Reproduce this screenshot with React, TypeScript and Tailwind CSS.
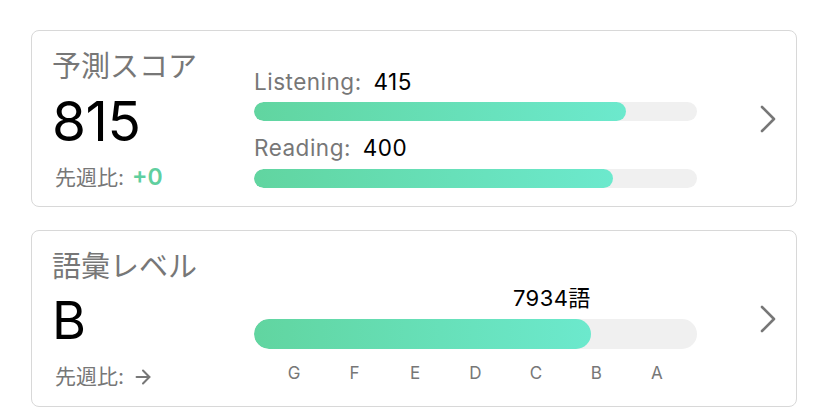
import { ArrowRight } from 'lucide-react';

const font = { fontFamily: 'Inter, "Noto Sans CJK JP", sans-serif' };

const Chevron = () => (
  <svg width="16" height="28" viewBox="0 0 16 28" fill="none">
    <polyline points="2,2 14,14 2,26" stroke="#777" strokeWidth="2.6" strokeLinecap="round" strokeLinejoin="round" />
  </svg>
);

const Bar = ({ pct, h }: { pct: number; h: string }) => (
  <div className={`w-full ${h} rounded-full bg-[#f0f0f0] overflow-hidden`}>
    <div
      className="h-full rounded-full bg-gradient-to-r from-[#61d5a0] to-[#6ce9cd]"
      style={{ width: `${pct}%` }}
    />
  </div>
);

const App = () => {
  const grades = ['G', 'F', 'E', 'D', 'C', 'B', 'A'];
  return (
    <div className="w-[828px] h-[418px] bg-white pt-[30px] pl-[31px]" style={font}>
      {/* Score card */}
      <div className="w-[766px] h-[177px] rounded-[8px] border border-[#d8d8d8] flex">
        <div className="w-[222px] pl-[20px] pt-[18px] flex flex-col">
          <div className="text-[29px] leading-[36px] text-[#777]">予測スコア</div>
          <div className="text-[55px] leading-[60px] text-black mt-[6px] tracking-[-0.5px]">815</div>
          <div className="text-[21px] leading-[26px] text-[#777] mt-[13px] pl-[3px]">
            先週比: <span className="text-[#5fcf9f] font-semibold text-[23px] ml-[2px]">+0</span>
          </div>
        </div>
        <div className="w-[443px] pt-[37px]">
          <div className="text-[22.5px] leading-[27px] text-[#777] tracking-[0.5px]">
            Listening: <span className="text-black ml-[5px]">415</span>
          </div>
          <div className="mt-[7px]">
            <Bar pct={84} h="h-[19px]" />
          </div>
          <div className="text-[22.5px] leading-[27px] text-[#777] mt-[13px] tracking-[0.5px]">
            Reading: <span className="text-black ml-[5px]">400</span>
          </div>
          <div className="mt-[8px]">
            <Bar pct={81} h="h-[19px]" />
          </div>
        </div>
        <div className="flex-1 flex items-center pl-[63px]">
          <Chevron />
        </div>
      </div>

      <div className="h-[23px]" />

      {/* Vocabulary card */}
      <div className="w-[766px] h-[177px] rounded-[8px] border border-[#d8d8d8] flex">
        <div className="w-[222px] pl-[20px] pt-[18px] flex flex-col">
          <div className="text-[29px] leading-[36px] text-[#777]">語彙レベル</div>
          <div className="text-[52px] leading-[60px] text-black mt-[6px]">B</div>
          <div className="text-[21px] leading-[26px] text-[#777] mt-[13px] pl-[3px] flex items-center">
            先週比:
            <ArrowRight className="ml-[8px]" size={22} strokeWidth={2.2} color="#777" />
          </div>
        </div>
        <div className="w-[443px] pt-[54px]">
          <div className="w-[76%] text-right text-[22px] leading-[26px] text-black tracking-[0.4px]">7934語</div>
          <div className="mt-[8px]">
            <Bar pct={76} h="h-[30px]" />
          </div>
          <div className="grid grid-cols-7 px-[10px] mt-[13px] text-[17px] leading-[22px] text-[#777]">
            {grades.map((g) => (
              <div key={g} className="text-center">{g}</div>
            ))}
          </div>
        </div>
        <div className="flex-1 flex items-center pl-[63px]">
          <Chevron />
        </div>
      </div>
    </div>
  );
};

export default App;
